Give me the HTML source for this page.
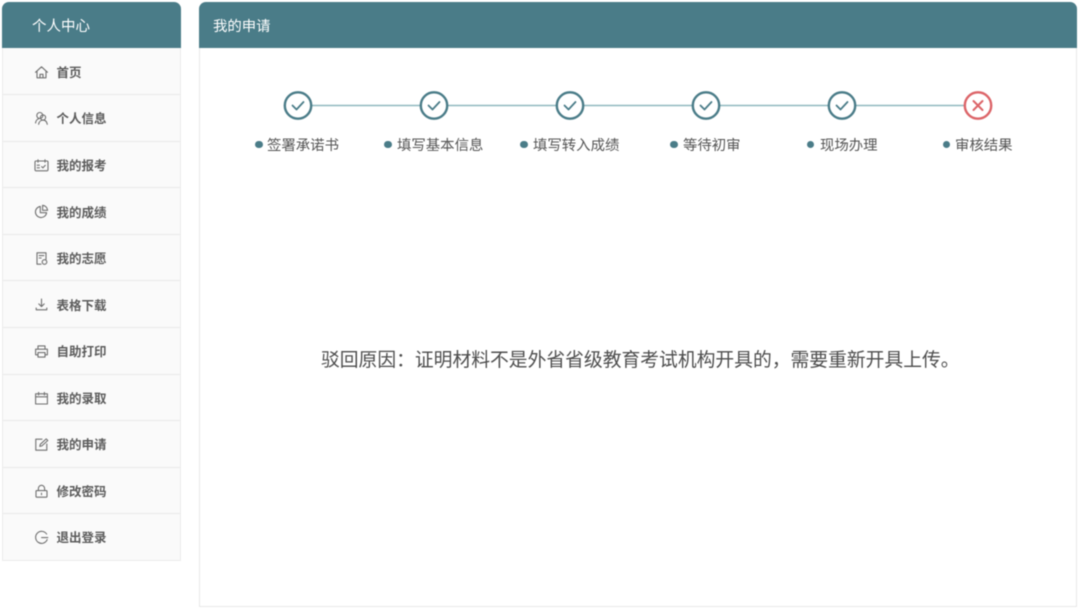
<!DOCTYPE html>
<html lang="zh">
<head>
<meta charset="utf-8">
<title>我的申请</title>
<style>
html,body{margin:0;padding:0;background:#fff;}
body{width:1080px;height:609px;position:relative;overflow:hidden;font-family:"Liberation Sans","Noto Sans CJK SC",sans-serif;}
#wrap{position:absolute;left:0;top:0;width:1080px;height:609px;filter:blur(.4px);}
.head{position:absolute;top:2px;height:46.5px;background:#4a7c88;border-radius:7px 7px 0 0;color:#fff;line-height:50px;}
#side{position:absolute;left:2px;top:48px;width:179px;height:513px;background:#fafafa;border:1px solid #ececec;border-top:none;box-sizing:border-box;}
.row{position:absolute;left:0;width:177px;height:1px;background:#e9e9e9;}
.it{position:absolute;left:56.5px;font-size:12.5px;font-weight:700;color:#5c5c5c;line-height:20px;white-space:nowrap;}
.ic{position:absolute;left:34px;width:15px;height:15px;}
.ic *{fill:none;stroke:#707070;stroke-width:1.1;stroke-linecap:round;stroke-linejoin:round;}
#main{position:absolute;left:199px;top:48px;width:878px;height:559px;border:1px solid #e8e8e8;border-top:none;box-sizing:border-box;background:#fff;}
.lb{position:absolute;top:135.5px;font-size:14.4px;color:#555;line-height:20px;white-space:nowrap;}
.dot{position:absolute;top:140.7px;width:7.6px;height:7.6px;border-radius:50%;background:#4a7c88;}
#msg{position:absolute;left:321px;top:346px;font-size:18.79px;line-height:28px;color:#4d4d4d;white-space:nowrap;}
</style>
</head>
<body>
<div id="wrap">
<div class="head" style="left:2px;width:179px;font-size:14.5px;text-indent:30px;">个人中心</div>
<div class="head" style="left:199px;width:878px;font-size:14.4px;text-indent:14px;">我的申请</div>
<div id="side"></div>
<div id="main"></div>

<div class="row" style="left:3px;top:94px"></div>
<div class="row" style="left:3px;top:141px"></div>
<div class="row" style="left:3px;top:187px"></div>
<div class="row" style="left:3px;top:234px"></div>
<div class="row" style="left:3px;top:280px"></div>
<div class="row" style="left:3px;top:327px"></div>
<div class="row" style="left:3px;top:374px"></div>
<div class="row" style="left:3px;top:420px"></div>
<div class="row" style="left:3px;top:467px"></div>
<div class="row" style="left:3px;top:513px"></div>

<div class="it" style="top:63px">首页</div>
<div class="it" style="top:109px">个人信息</div>
<div class="it" style="top:156px">我的报考</div>
<div class="it" style="top:202.5px">我的成绩</div>
<div class="it" style="top:249px">我的志愿</div>
<div class="it" style="top:295.5px">表格下载</div>
<div class="it" style="top:342px">自助打印</div>
<div class="it" style="top:389px">我的录取</div>
<div class="it" style="top:435px">我的申请</div>
<div class="it" style="top:482px">修改密码</div>
<div class="it" style="top:528px">退出登录</div>

<svg class="ic" style="top:65px" viewBox="0 0 15 15"><path d="M1.5 7.3 7.5 1.8l6 5.5M3 6.2v6.6h9V6.2M6 12.8V9.3h3v3.5"/></svg>
<svg class="ic" style="top:111px" viewBox="0 0 15 15"><circle cx="5.8" cy="4.5" r="3"/><circle cx="9" cy="6.5" r="2.6"/><path d="M1.5 12c.4-2.5 1.8-4 3.5-4.4M4.6 13.3c.4-2.6 2.2-4.2 4.4-4.2s3.8 1.5 4.3 4.2"/></svg>
<svg class="ic" style="top:158px" viewBox="0 0 15 15"><rect x="1" y="3" width="13" height="9.8" rx="1"/><path d="M4 1.8v2.4M11 1.8v2.4M3.2 7.2h2.2M3.2 9.8h2.2M7.6 8.6l1.3 1.3 2.4-2.6"/></svg>
<svg class="ic" style="top:204px" viewBox="0 0 15 15"><path d="M6.3 2.4a5.6 5.6 0 1 0 6.3 6.3H6.3z"/><path d="M8.6 1.3a5.4 5.4 0 0 1 5 5h-5z"/></svg>
<svg class="ic" style="top:251px" viewBox="0 0 15 15"><path d="M7 13.2H3V1.8h9v6.6M5.2 4.6h4.6M5.2 7h2"/><circle cx="10.5" cy="11" r="2.3"/></svg>
<svg class="ic" style="top:297px" viewBox="0 0 15 15"><path d="M7.5 2v7.4M4.8 6.9l2.7 2.7 2.7-2.7M2.2 11v1.8h10.6V11"/></svg>
<svg class="ic" style="top:344px" viewBox="0 0 15 15"><path d="M4 5.2V1.9h7v3.3M4 10.8H1.6V5.2h11.8v5.6H11"/><rect x="4" y="8.6" width="7" height="4.5"/></svg>
<svg class="ic" style="top:391px" viewBox="0 0 15 15"><rect x="1.6" y="2.8" width="11.8" height="10.2"/><path d="M1.6 5.8h11.8M4.6 1.4v2.6M10.4 1.4v2.6"/></svg>
<svg class="ic" style="top:437px" viewBox="0 0 15 15"><path d="M8 2.2H1.8v11h11V7"/><path d="M5.8 9.4l.5-2.1 5.9-5.4 1.6 1.6-5.9 5.4z"/></svg>
<svg class="ic" style="top:484px" viewBox="0 0 15 15"><rect x="2" y="6.6" width="11" height="6.6" rx=".8"/><path d="M4.4 6.6V4.4a3.1 3.1 0 0 1 6.2 0v2.2M7.5 9.2v1.5"/></svg>
<svg class="ic" style="top:530px" viewBox="0 0 15 15"><path d="M12.6 4a6 6 0 1 0 .6 5.6"/><path d="M7.6 7.6h6.2"/></svg>

<svg style="position:absolute;left:0;top:0" width="1080" height="160" viewBox="0 0 1080 160">
<g stroke="#8fb8bf" stroke-width="1.5"><path d="M312 105.5H420M448 105.5H556M584 105.5H692M720 105.5H828M856 105.5H964"/></g>
<g fill="#fff" stroke="#4a7c88" stroke-width="2.4">
<circle cx="298" cy="105.5" r="13.2"/><circle cx="434" cy="105.5" r="13.2"/><circle cx="570" cy="105.5" r="13.2"/><circle cx="706" cy="105.5" r="13.2"/><circle cx="842" cy="105.5" r="13.2"/>
</g>
<g fill="none" stroke="#4a7c88" stroke-width="1.8" stroke-linecap="round" stroke-linejoin="round">
<path d="M292.5 105.5l4 4 7-7.5"/><path d="M428.5 105.5l4 4 7-7.5"/><path d="M564.5 105.5l4 4 7-7.5"/><path d="M700.5 105.5l4 4 7-7.5"/><path d="M836.5 105.5l4 4 7-7.5"/>
</g>
<circle cx="978" cy="105.5" r="13.2" fill="#fff" stroke="#dc6468" stroke-width="2.4"/>
<path d="M973.5 101l9 9M982.5 101l-9 9" fill="none" stroke="#dc6468" stroke-width="2" stroke-linecap="round"/>
</svg>

<div class="dot" style="left:255.2px"></div><div class="lb" style="left:267px">签署承诺书</div>
<div class="dot" style="left:384.2px"></div><div class="lb" style="left:397px">填写基本信息</div>
<div class="dot" style="left:520.2px"></div><div class="lb" style="left:533px">填写转入成绩</div>
<div class="dot" style="left:670.2px"></div><div class="lb" style="left:683px">等待初审</div>
<div class="dot" style="left:806.7px"></div><div class="lb" style="left:820px">现场办理</div>
<div class="dot" style="left:942.7px"></div><div class="lb" style="left:955px">审核结果</div>

<div id="msg">驳回原因&#xFF1A;证明材料不是外省省级教育考试机构开具的&#xFF0C;需要重新开具上传。</div>
</div>
</body>
</html>
